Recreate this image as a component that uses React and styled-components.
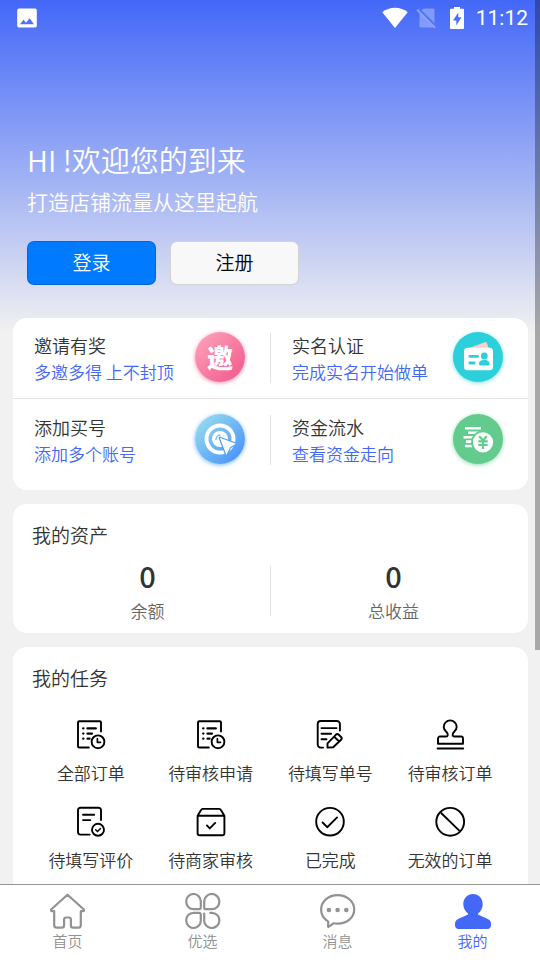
import React from 'react';
import styled, { createGlobalStyle, css } from 'styled-components';

const GlobalStyle = createGlobalStyle`
  * {
    box-sizing: border-box;
  }

  body {
    margin: 0;
    background: #f1f1f1;
    color: #333;
    font-family: "Noto Sans CJK SC", sans-serif;
    font-weight: 350;
  }

  h1, h2, p {
    margin: 0;
    font-weight: inherit;
  }

  a {
    color: inherit;
    text-decoration: none;
  }

  svg {
    display: block;
    flex: none;
  }
`;

const Screen = styled.div`
  position: relative;
  display: flex;
  flex-direction: column;
  height: 100vh;
`;

const Content = styled.main`
  flex: 1;
  min-height: 0;
  overflow-y: auto;
  scrollbar-width: none;
`;

const Page = styled.div`
  padding-bottom: 14px;
  background: linear-gradient(#4368f8, #f1f1f1 332px);
`;

const ScrollThumb = styled.div`
  position: absolute;
  top: 0;
  right: 0;
  width: 5px;
  height: 67.7%;
  background: rgba(0, 0, 0, 0.3);
  pointer-events: none;
`;

const StatusBar = styled.div`
  display: flex;
  align-items: center;
  justify-content: space-between;
  height: 36px;
  padding: 0 12px 0 16px;
  color: #fff;
`;

const StatusIcons = styled.div`
  display: flex;
  align-items: center;
  gap: 8px;
`;

const Clock = styled.span`
  font: 400 21px/36px Roboto, sans-serif;
`;

const Hero = styled.header`
  padding: 103px 27px 33px;
  color: #fff;
`;

const Greeting = styled.h1`
  font-size: 29px;
  line-height: 40px;
`;

const Slogan = styled.p`
  margin-top: 8px;
  font-size: 21px;
  line-height: 28px;
`;

const Actions = styled.div`
  display: flex;
  gap: 14px;
  margin-top: 26px;
`;

const Button = styled.button`
  min-width: 129px;
  height: 44px;
  padding: 0 16px 2px;
  border: 1px solid rgba(0, 0, 0, 0.15);
  border-radius: 7px;
  background: #f8f8f8;
  color: #000;
  font-family: inherit;
  font-size: 19px;
  font-weight: inherit;
  line-height: 28px;

  ${props => props.$primary && css`
    background: #007aff;
    color: #fff;
  `}
`;

const Cards = styled.div`
  display: flex;
  flex-direction: column;
  gap: 14px;
  padding: 0 12px 0 13px;
`;

const Card = styled.section`
  border-radius: 14px;
  background: #fff;
`;

const CardTitle = styled.h2`
  padding: 17px 19px 0;
  font-size: 19px;
  line-height: 28px;
`;

const Entries = styled(Card)`
  padding-bottom: 10px;
`;

const EntryRow = styled.div`
  display: grid;
  grid-template-columns: 1fr 1px 1fr;
  padding: 14px 0;

  & + & {
    padding-top: 15px;
    border-top: 1px solid #e4e4e4;
  }
`;

const Entry = styled.a`
  display: flex;
  justify-content: space-between;
  padding: 0 24px 0 21px;
`;

const EntryTitle = styled.p`
  font-size: 18px;
  line-height: 27px;
`;

const EntryText = styled.p`
  color: #4368f8;
  font-size: 17px;
  line-height: 25px;
`;

const Divider = styled.div`
  align-self: center;
  width: 1px;
  height: 50px;
  background: #e4e4e4;
`;

const Badge = styled.span`
  display: flex;
  align-items: center;
  justify-content: center;
  flex: none;
  width: 50px;
  height: 50px;
  margin: 0 1px;
  border-radius: 50%;
  background: ${props => props.$fill};
  box-shadow: 0 1px 4px ${props => props.$glow};
  color: #fff;
  font-size: 26px;
  font-weight: 900;
  line-height: 1;
`;

const Stats = styled.div`
  display: grid;
  grid-template-columns: 1fr 1px 1fr;
  padding: 10px 12px 10px;
`;

const Stat = styled.div`
  text-align: center;
`;

const StatValue = styled.p`
  font-size: 29px;
  font-weight: 500;
  line-height: 32px;
`;

const StatLabel = styled.p`
  margin-top: 8px;
  color: #666;
  font-size: 17px;
  line-height: 24px;
`;

const Tasks = styled.div`
  display: grid;
  grid-template-columns: repeat(4, 1fr);
  row-gap: 21px;
  padding: 27px 18px 22px;
`;

const Task = styled.a`
  display: flex;
  flex-direction: column;
  align-items: center;
  gap: 10px;
  font-size: 17px;
  line-height: 24px;

  svg {
    color: #000;
  }
`;

const TabBar = styled.nav`
  display: grid;
  grid-template-columns: repeat(4, 1fr);
  padding: 8px 0;
  border-top: 1px solid #949494;
  background: #fff;
`;

const Tab = styled.a`
  display: flex;
  flex-direction: column;
  align-items: center;
  gap: 1px;
  color: ${props => (props.$active ? '#4368f8' : '#929292')};
  font-size: 15px;
  line-height: 22px;
`;

const TaskIcon = ({ children }) => (
  <svg width="32" height="32" viewBox="0 0 32 32" fill="none" stroke="currentColor" strokeWidth="1.9" strokeLinecap="round" strokeLinejoin="round" aria-hidden="true">
    {children}
  </svg>
);

const TabIcon = ({ children }) => (
  <svg width="36" height="36" viewBox="0 0 36 36" fill="none" stroke="currentColor" strokeWidth="2.2" strokeLinecap="round" strokeLinejoin="round" aria-hidden="true">
    {children}
  </svg>
);

const OrderClockIcon = () => (
  <TaskIcon>
    <path d="M26 12.5V3.5A1.3 1.3 0 0 0 24.7 2.2H4.3A1.3 1.3 0 0 0 3 3.5v23.7a1.3 1.3 0 0 0 1.3 1.3h9.5" />
    <path d="M8.2 9.4h.2M12.5 9.4h8.3M8.2 14.6h.2M12.5 14.6h4.5M8.2 19.7h.2M12.5 19.7h2" strokeWidth="2.3" />
    <circle cx="23" cy="22.8" r="6.4" />
    <path d="M22.4 19.7v3.6h3.1" strokeWidth="1.7" />
  </TaskIcon>
);

const FormPencilIcon = () => (
  <TaskIcon>
    <path d="M25.9 11.5V5a3 3 0 0 0-3-3H6.7a3 3 0 0 0-3 3v20.6a3 3 0 0 0 3 3h2.4" />
    <path d="M7.5 9.1h15M7.5 14.8h9.6M7.5 20.3h5" />
    <path d="M13.5 28.6v-4.2l8.3-8.6a2.2 2.2 0 0 1 3 0l2.3 2.2a2 2 0 0 1 0 2.8l-7.9 7.5zM20.1 17.6l4.8 4.7" />
  </TaskIcon>
);

const StampIcon = () => (
  <TaskIcon>
    <path d="M4 24.7v-5.2a2 2 0 0 1 2-2h6.2c1.6 0 1.9-1.5 1.2-3.2-.8-1.6-3.7-3.4-3.7-6.4a6.5 6.5 0 0 1 13 0c0 3-2.9 4.8-3.7 6.4-.7 1.7-.4 3.2 1.2 3.2H27a2 2 0 0 1 2 2v5.2z" />
    <path d="M3.6 29.5h25.6" />
  </TaskIcon>
);

const ReviewIcon = () => (
  <TaskIcon>
    <path d="M26 14V4.2a2.5 2.5 0 0 0-2.5-2.5h-18A2.5 2.5 0 0 0 3 4.2v21.9a2.5 2.5 0 0 0 2.5 2.5h9.2" />
    <path d="M8 8.8h11.2M8 14.1h7.3" />
    <circle cx="23" cy="23.8" r="6" />
    <path d="M20.7 23.8l1.8 1.7 3-3" strokeWidth="1.5" />
  </TaskIcon>
);

const ParcelIcon = () => (
  <TaskIcon>
    <path d="M2.6 9.8v17.4a2 2 0 0 0 2 2h22.8a2 2 0 0 0 2-2V9.8zM2.6 9.8l3.3-5.6a2.4 2.4 0 0 1 2-1.3h16.2a2.4 2.4 0 0 1 2 1.3l3.3 5.6" />
    <path d="M11.9 19.4l2.9 3 5.4-5.5" />
  </TaskIcon>
);

const DoneIcon = () => (
  <TaskIcon>
    <circle cx="16" cy="15.7" r="13.8" />
    <path d="M8.6 16.5l4.6 4.7 9.9-9.8" />
  </TaskIcon>
);

const InvalidIcon = () => (
  <TaskIcon>
    <circle cx="16.2" cy="15.8" r="13.9" />
    <path d="M7.4 7.2l17.6 17.2" />
  </TaskIcon>
);

const HomeIcon = () => (
  <TabIcon>
    <path d="M17.5 1.7L1.4 16.2c-.8 1.2-.2 2 .8 2h2v14a2.5 2.5 0 0 0 2.5 2.5h5.2a2.2 2.2 0 0 0 2.2-2.2v-6a2 2 0 0 1 2-2h2.8a2 2 0 0 1 2 2v6a2.2 2.2 0 0 0 2.2 2.2h5.2a2.5 2.5 0 0 0 2.5-2.5v-14h2c1 0 1.6-.8.8-2z" />
  </TabIcon>
);

const CloverIcon = () => (
  <TabIcon>
    <path d="M15.8 14.4V9a7.3 7.6 0 1 0-7.3 7.2h5.5a1.8 1.8 0 0 0 1.8-1.8z" />
    <path d="M19.2 14.4V9a7.6 7.6 0 1 1 7.6 7.2h-5.8a1.8 1.8 0 0 1-1.8-1.8z" />
    <path d="M15.8 21.6V27a7.3 7.6 0 1 1-7.3-7.2h5.5a1.8 1.8 0 0 1 1.8 1.8z" />
    <path d="M19.2 20.5V27a7.6 7.6 0 1 0 7.6-7.2h-1.6" />
  </TabIcon>
);

const ChatIcon = () => (
  <TabIcon>
    <path d="M8.3 28.6C3.8 26 1.1 21.6 1.1 16.6 1.1 8.5 8.4 2.1 17.6 2.1s16.6 6.3 16.6 14.4-7.4 14.2-16.6 14.2c-1.6 0-3-.1-4.3-.4l-4.4 3.4c-.4.3-.9 0-.9-.5z" />
    <g fill="currentColor" stroke="none">
      <circle cx="8.9" cy="17" r="2.3" />
      <circle cx="17.6" cy="17" r="2.3" />
      <circle cx="26.3" cy="17" r="2.3" />
    </g>
  </TabIcon>
);

const PersonIcon = () => (
  <TabIcon>
    <path fill="currentColor" stroke="none" d="M18 1c5.8 0 9.7 4.5 9.7 10.2 0 4-1.9 7.2-4.7 9.2v1.2c3.6 2 7.2 3.2 10.2 4.6 2 1 2.8 2.6 2.8 4.8v1.3a3.7 3.7 0 0 1-3.7 3.7H3.7A3.7 3.7 0 0 1 0 32.3V31c0-2.2.8-3.8 2.8-4.8C5.8 24.8 9.4 23.6 13 21.6v-1.2c-2.8-2-4.7-5.2-4.7-9.2C8.3 5.5 12.2 1 18 1z" />
  </TabIcon>
);

const TargetIcon = () => (
  <svg width="50" height="50" viewBox="0 0 50 50" aria-hidden="true">
    <circle cx="25" cy="25" r="13.5" fill="none" stroke="#fff" strokeWidth="4" />
    <circle cx="25" cy="25" r="8" fill="#fff" />
    <path d="M21 25.4a4.2 4.2 0 0 1 4.2-4.2" fill="none" stroke="#6ab6f5" strokeWidth="1.3" strokeLinecap="round" />
    <path d="M24.8 23.8L41 29.8 35 33.2 31.4 41z" fill="#fff" stroke="#4f9dfc" strokeWidth="2.4" strokeLinejoin="round" />
    <path d="M24.8 23.8L41 29.8 35 33.2 31.4 41z" fill="#fff" />
  </svg>
);

const IdCardIcon = () => (
  <svg width="50" height="50" viewBox="0 0 50 50" aria-hidden="true">
    <path d="M16 16l16-5.8a1.5 1.5 0 0 1 2 1L36 17z" fill="#fbd0c8" />
    <rect x="11" y="15.7" width="29" height="22.5" rx="3.5" fill="#fff" />
    <path d="M16.8 24.3h7.8M16.8 31h4.4" stroke="#2bd0da" strokeWidth="2.8" strokeLinecap="round" />
    <circle cx="31.3" cy="24" r="3.4" fill="#2bd0da" />
    <path d="M26 32c0-3 2-4 5.300-4s5.300 1 5.300 4c0 1-.5 1.400-1.500 1.400h-7.600c-1 0-1.500-.4-1.500-1.400z" fill="#2bd0da" />
  </svg>
);

const CashFlowIcon = () => (
  <svg width="50" height="50" viewBox="0 0 50 50" fill="none" aria-hidden="true">
    <path d="M12 14.3h16M15 18.7h11M10.5 23.2H21M13 27.6h7M12 32h8" stroke="#fff" strokeWidth="2.6" />
    <circle cx="30" cy="28.3" r="11" fill="#fff" stroke="#62cb8d" strokeWidth="1.8" />
    <path d="M26.2 22.2l3.8 4.2 3.8-4.2M25.3 27.3h9.4M25.3 31h9.4M30 26.4V35" stroke="#62cb8d" strokeWidth="2.2" />
  </svg>
);

const ImageIcon = () => (
  <svg width="22" height="22" viewBox="0 0 22 22" aria-hidden="true">
    <path fill="#fff" fillRule="evenodd" d="M3 1.5h16A1.8 1.8 0 0 1 20.8 3.3v15.5a1.8 1.8 0 0 1-1.8 1.8H3a1.8 1.8 0 0 1-1.8-1.8V3.3A1.8 1.8 0 0 1 3 1.5zM4 17.2h14l-4.5-6-3.5 4.6-2.5-3z" />
  </svg>
);

const WifiIcon = () => (
  <svg width="26" height="22" viewBox="0 0 26 22" aria-hidden="true">
    <path fill="#fff" d="M13 21L.3 5.2C3.8 2.4 8.3.8 13 .8s9.2 1.6 12.7 4.4z" />
  </svg>
);

const NoSimIcon = () => (
  <svg width="22" height="22" viewBox="0 0 22 22" aria-hidden="true">
    <path fill="#fff" fillOpacity="0.3" d="M7.5 1.5H17A1.5 1.5 0 0 1 18.5 3v16a1.5 1.5 0 0 1-1.5 1.5H5A1.5 1.5 0 0 1 3.5 19V5.5z" />
    <path d="M2.2 1.8l18 18" stroke="#5577f8" strokeWidth="3" />
    <path d="M1.2 2.8l18 18" stroke="#8ea4fa" strokeWidth="1.8" />
  </svg>
);

const BatteryIcon = () => (
  <svg width="22" height="22" viewBox="0 0 22 22" aria-hidden="true">
    <path fill="#fff" fillRule="evenodd" d="M8 0h6v1.8h3a1 1 0 0 1 1 1V21a1 1 0 0 1-1 1H5a1 1 0 0 1-1-1V2.8a1 1 0 0 1 1-1h3zM12.3 5.5l-5.3 8h3.3v5l5.2-8.2h-3.2z" />
  </svg>
);

const tasks = [
  { label: '全部订单', Icon: OrderClockIcon },
  { label: '待审核申请', Icon: OrderClockIcon },
  { label: '待填写单号', Icon: FormPencilIcon },
  { label: '待审核订单', Icon: StampIcon },
  { label: '待填写评价', Icon: ReviewIcon },
  { label: '待商家审核', Icon: ParcelIcon },
  { label: '已完成', Icon: DoneIcon },
  { label: '无效的订单', Icon: InvalidIcon },
];

const tabs = [
  { label: '首页', Icon: HomeIcon },
  { label: '优选', Icon: CloverIcon },
  { label: '消息', Icon: ChatIcon },
  { label: '我的', Icon: PersonIcon, active: true },
];

const EntryLink = ({ title, text, fill, glow, children }) => (
  <Entry href="#">
    <div>
      <EntryTitle>{title}</EntryTitle>
      <EntryText>{text}</EntryText>
    </div>
    <Badge $fill={fill} $glow={glow}>{children}</Badge>
  </Entry>
);

const App = () => (
  <Screen>
    <GlobalStyle />
    <Content>
      <Page>
        <StatusBar>
          <ImageIcon />
          <StatusIcons>
            <WifiIcon />
            <NoSimIcon />
            <BatteryIcon />
            <Clock>11:12</Clock>
          </StatusIcons>
        </StatusBar>
        <Hero>
          <Greeting>HI !欢迎您的到来</Greeting>
          <Slogan>打造店铺流量从这里起航</Slogan>
          <Actions>
            <Button type="button" $primary>登录</Button>
            <Button type="button">注册</Button>
          </Actions>
        </Hero>
        <Cards>
          <Entries>
            <EntryRow>
              <EntryLink title="邀请有奖" text="多邀多得 上不封顶" fill="linear-gradient(135deg, #fda6bc, #f2558a)" glow="#f98fb0">邀</EntryLink>
              <Divider />
              <EntryLink title="实名认证" text="完成实名开始做单" fill="#2bd0da" glow="#7fe0e6"><IdCardIcon /></EntryLink>
            </EntryRow>
            <EntryRow>
              <EntryLink title="添加买号" text="添加多个账号" fill="linear-gradient(135deg, #9fe3ea, #3f8cff)" glow="#7db8fb"><TargetIcon /></EntryLink>
              <Divider />
              <EntryLink title="资金流水" text="查看资金走向" fill="#62cb8d" glow="#93dbb0"><CashFlowIcon /></EntryLink>
            </EntryRow>
          </Entries>
          <Card>
            <CardTitle>我的资产</CardTitle>
            <Stats>
              <Stat>
                <StatValue>0</StatValue>
                <StatLabel>余额</StatLabel>
              </Stat>
              <Divider />
              <Stat>
                <StatValue>0</StatValue>
                <StatLabel>总收益</StatLabel>
              </Stat>
            </Stats>
          </Card>
          <Card>
            <CardTitle>我的任务</CardTitle>
            <Tasks>
              {tasks.map(({ label, Icon }) => (
                <Task key={label} href="#">
                  <Icon />
                  {label}
                </Task>
              ))}
            </Tasks>
          </Card>
        </Cards>
      </Page>
    </Content>
    <TabBar>
      {tabs.map(({ label, Icon, active }) => (
        <Tab key={label} href="#" $active={active} aria-current={active ? 'page' : undefined}>
          <Icon />
          {label}
        </Tab>
      ))}
    </TabBar>
    <ScrollThumb />
  </Screen>
);

export default App;
